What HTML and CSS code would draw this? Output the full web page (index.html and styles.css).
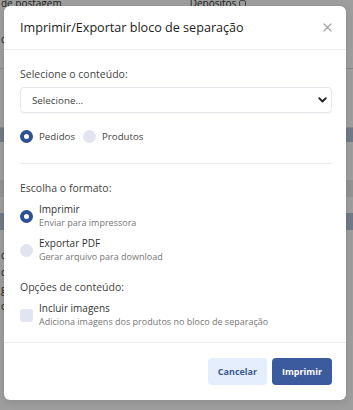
FILE: index.html
```html
<!DOCTYPE html>
<html lang="pt">
<head>
<meta charset="utf-8">
<link rel="stylesheet" href="styles.css">
</head>
<body>
<div class="page">
  <div class="bg-row bg-top"><span>de postagem</span><span class="bg-dep">Depósitos <i class="bg-box"></i></span></div>
  <div class="bg-row bg-plain"><span>c</span></div>
  <div class="bg-row bg-plain2"></div>
  <div class="bg-row bg-blue"></div>
  <div class="bg-row bg-gap"></div>
  <div class="bg-row bg-grey"></div>
  <div class="bg-row bg-gap2"></div>
  <div class="bg-row bg-blue2"></div>
  <div class="bg-row bg-gap3"></div>
  <div class="bg-row bg-text"><span>c</span></div>
  <div class="bg-row bg-text"><span>c</span></div>
  <div class="bg-row bg-text"><span>g</span></div>
  <div class="bg-row bg-text"><span>c</span></div>
</div>

<div class="overlay"></div>

<div class="modal">
  <div class="modal-header">
    <h1 class="modal-title">Imprimir/Exportar bloco de separação</h1>
    <svg class="modal-close" width="9" height="9" viewBox="0 0 9 9"><path d="M1 1 L8 8 M8 1 L1 8" stroke="#a3a3a3" stroke-width="1.2" stroke-linecap="round"/></svg>
  </div>
  <div class="modal-body">
    <div class="section-label first">Selecione o conteúdo:</div>
    <div class="select">
      <span>Selecione...</span>
      <svg class="chev" width="9" height="6" viewBox="0 0 9 6"><path d="M1.2 1.2 L4.5 4.5 L7.8 1.2" fill="none" stroke="#222" stroke-width="1.9" stroke-linecap="round" stroke-linejoin="round"/></svg>
    </div>
    <div class="radio-row">
      <label class="inline-opt"><span class="radio on"></span>Pedidos</label>
      <label class="inline-opt"><span class="radio"></span>Produtos</label>
    </div>
    <div class="divider"></div>
    <div class="section-label">Escolha o formato:</div>
    <div class="opt">
      <span class="radio on"></span>
      <div class="opt-text"><div class="opt-title">Imprimir</div><div class="opt-sub">Enviar para impressora</div></div>
    </div>
    <div class="opt">
      <span class="radio"></span>
      <div class="opt-text"><div class="opt-title">Exportar PDF</div><div class="opt-sub">Gerar arquivo para download</div></div>
    </div>
    <div class="section-label">Opções de conteúdo:</div>
    <div class="opt">
      <span class="check"></span>
      <div class="opt-text"><div class="opt-title">Incluir imagens</div><div class="opt-sub">Adiciona imagens dos produtos no bloco de separação</div></div>
    </div>
  </div>
  <div class="modal-footer">
    <button class="btn btn-light">Cancelar</button>
    <button class="btn btn-primary">Imprimir</button>
  </div>
</div>
</body>
</html>
```
FILE: styles.css
```css
* { box-sizing: border-box; }
html, body { margin: 0; padding: 0; }
body {
  width: 353px;
  height: 410px;
  overflow: hidden;
  font-family: "Open Sans", "Noto Sans", sans-serif;
  background: #ffffff;
  position: relative;
}
.page { display: flex; flex-direction: column; }
.bg-row { display: flex; align-items: center; font-size: 10px; color: #333; padding: 0 1px; flex: none; }
.bg-top { height: 9px; align-items: flex-end; }
.bg-top span { line-height: 12px; }
.bg-dep { margin-left: 128px; display: flex; align-items: center; gap: 3px; }
.bg-box { display: inline-block; width: 7px; height: 7px; border: 1px solid #777; border-radius: 2px; }
.bg-plain { height: 60px; border-bottom: 1px solid #ddd; }
.bg-plain2 { height: 59px; border-bottom: 1px solid #ddd; }
.bg-blue { height: 14px; background: #b9c6da; }
.bg-gap { height: 38px; }
.bg-grey { height: 17px; background: #eeeeee; }
.bg-gap2 { height: 16px; }
.bg-blue2 { height: 17px; background: #b9c6da; }
.bg-gap3 { height: 16px; }
.bg-text { height: 17px; }

.overlay {
  position: absolute;
  inset: 0;
  background: rgba(0, 0, 0, 0.38);
}

.modal {
  position: absolute;
  left: 4px;
  top: 6px;
  width: 342px;
  height: 394px;
  background: #fff;
  border-radius: 6px;
  box-shadow: 0 2px 8px rgba(0, 0, 0, 0.12);
  display: flex;
  flex-direction: column;
  color: #333;
}
.modal-header {
  height: 44px;
  flex: none;
  display: flex;
  align-items: center;
  justify-content: space-between;
  padding: 0 14px 0 16px;
  border-bottom: 1px solid #eaedf0;
}
.modal-title {
  margin: 0;
  font-size: 12.6px;
  font-weight: 500;
  color: #222;
}
.modal-close { display: block; }

.modal-body {
  flex: 1;
  padding: 17px 14px 0 16px;
  border-bottom: 1px solid #eaedf0;
}
.section-label { font-size: 10.5px; color: #444; line-height: 14px; margin-top: 17px; }
.section-label.first { margin-top: 0; }
.select {
  margin-top: 6px;
  height: 26px;
  border: 1px solid #e3e6ea;
  border-radius: 4px;
  box-shadow: 0 1px 1px rgba(0, 0, 0, 0.03);
  display: flex;
  align-items: center;
  justify-content: space-between;
  padding: 0 4px 0 11px;
  font-size: 9.8px;
  color: #444;
}
.chev { display: block; }
.radio-row { display: flex; gap: 8px; margin-top: 17px; height: 13px; align-items: center; }
.inline-opt { display: flex; align-items: center; gap: 6px; font-size: 9.7px; color: #444; }
.radio {
  width: 13px; height: 13px; border-radius: 50%;
  background: #e2e5ef; flex: none; display: inline-block;
}
.radio.on { background: #fff; border: 4.4px solid #2e4f92; }
.divider { height: 1px; background: #e9ecef; margin-top: 20px; }
.opt { display: flex; align-items: center; gap: 6px; margin-top: 8px; }
.opt-text { display: flex; flex-direction: column; }
.opt-title { font-size: 10px; color: #333; line-height: 13px; }
.opt-sub { font-size: 9px; color: #777; line-height: 13px; }
.check { width: 13px; height: 13px; border-radius: 3px; background: #e2e5ef; flex: none; }

.modal-footer {
  height: 57px;
  flex: none;
  display: flex;
  align-items: center;
  justify-content: flex-end;
  gap: 5px;
  padding: 0 14px;
}
.btn {
  height: 27px;
  border: none;
  border-radius: 4px;
  font-family: inherit;
  font-size: 9px;
  font-weight: 700;
  padding: 0;
}
.btn-light { background: #e5eefc; color: #3c5a93; width: 59px; }
.btn-primary { background: #3b5b9e; color: #fff; width: 60px; }
```
